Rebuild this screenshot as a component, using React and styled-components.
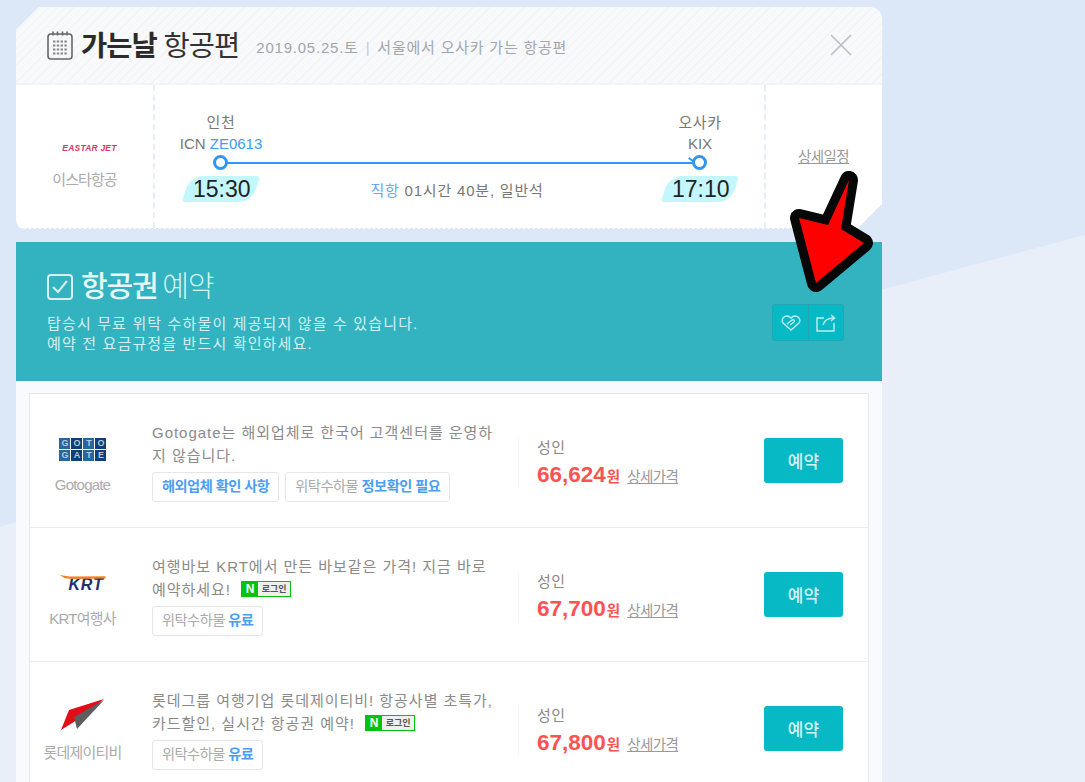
import React from "react";
import styled, { createGlobalStyle } from "styled-components";

const Global = createGlobalStyle`
  html, body { margin: 0; padding: 0; height: 782px; overflow: hidden; }
  body { font-family: "Liberation Sans", "Noto Sans CJK KR", sans-serif; }
  * { box-sizing: border-box; }
`;
const Page = styled.div`
  position: relative; width: 1085px; height: 782px; overflow: hidden; padding: 7px 0 0 16px;
  background: linear-gradient(-15.05deg, #e8eff8 0, #e8eff8 50.9%, #dce8f8 51%);
`;
const Column = styled.div`width: 866px; display: flex; flex-direction: column;`;
const FlightCard = styled.section`
  height: 222px; background: #fff; border-bottom: 1px dashed #dfe7f2;
  clip-path: path("M23 0 H852 Q866 0 866 14 V197 L841 222 H10 Q0 222 0 212 V23 Z");
`;
const CardHead = styled.header`
  height: 78px; display: flex; align-items: center; padding: 0 30px 0 31px;
  border-bottom: 2px solid #f2f4f8;
  background: repeating-linear-gradient(135deg, #f8f9fb 0 5px, #f2f3f7 5px 6px);
`;
const Title = styled.h1`margin: 1px 0 0 8px; font-size: 28.5px; line-height: 36px; font-weight: 400; color: #333; letter-spacing: -1px; white-space: nowrap; b { font-weight: 700; color: #2b2b2b; }`;
const Sub = styled.span`font-size: 15px; color: #a3a6ab; margin: 2px 0 0 17px; white-space: nowrap; letter-spacing: .78px; i { font-style: normal; color: #c5c8cc; margin: 0 7px; }`;
const Close = styled.button`margin-left: auto; width: 22px; height: 22px; padding: 0; border: 0; background: none; display: block;`;
const Route = styled.div`height: 143px; display: grid; grid-template-columns: 137px 613px 1fr;`;
const AirlineCell = styled.div`display: flex; flex-direction: column; align-items: center; padding-top: 55px;`;
const EastarLogo = styled.span`font: italic 700 8.5px/16px "Liberation Sans", sans-serif; color: #d8385f; white-space: nowrap; margin-left: 10px; letter-spacing: .2px;`;
const AirlineName = styled.span`margin-top: 14px; font-size: 15px; line-height: 20px; color: #aaa; letter-spacing: -.9px; white-space: nowrap;`;
const Timeline = styled.div`
  border-left: 2px dashed #e6edf7; border-right: 2px dashed #e6edf7; padding: 27px 22px 0 24px;
  display: grid; grid-template-columns: 84px 1fr 84px; grid-template-rows: 64px 1fr;
`;
const Stop = styled.div`grid-column: ${p => p.$col}; grid-row: 1; display: flex; flex-direction: column; align-items: center; font-size: 15px; line-height: 21px; color: #777; white-space: nowrap; letter-spacing: .6px; span { letter-spacing: 0; } em { font-style: normal; color: #3d9bfa; }`;
const Line = styled.div`position: relative; height: 2px; background: #3296f5; margin: 50px -42px 0; grid-column: 2; grid-row: 1; &::after { content: ""; position: absolute; right: 5px; top: -3px; width: 7px; height: 2px; background: #3296f5; transform: rotate(35deg); }`;
const Dot = styled.i`position: absolute; left: 50%; bottom: -8px; margin-left: -8px; width: 15px; height: 15px; border: 3px solid #3296f5; border-radius: 50%; background: #fff; z-index: 1;`;
const StopInner = styled.div`position: relative; display: flex; flex-direction: column; align-items: center; height: 50px;`;
const Time = styled.div`
  justify-self: center; width: 70px; height: 26px; background: #c4f7fd; border-radius: 13px 4px 13px 3px; transform: skewX(-18deg); display: flex; align-items: center; justify-content: center;
  span { transform: skewX(18deg) translateX(1px); font: 400 23px/26px "Liberation Sans", sans-serif; color: #222; }
`;
const Meta = styled.div`grid-column: 2; text-align: center; font-size: 15px; line-height: 26px; padding: 2px 7px 0 0; color: #777; letter-spacing: .8px; white-space: nowrap; em { font-style: normal; color: #62a9f2; }`;
const DetailCell = styled.div`display: flex; justify-content: center; padding-top: 62px; margin-left: -1px;`;
const Underlined = styled.a`font-size: 14.5px; line-height: 20px; color: #999; text-decoration: underline; letter-spacing: -.6px; white-space: nowrap;`;
const Banner = styled.section`
  margin-top: 13px; height: 139px; background: #33b3bf; padding: 25px 38px 0 31px; display: flex; justify-content: space-between; color: #fff;
`;
const BannerTitle = styled.h2`margin: 0 0 0 0; display: flex; align-items: center; gap: 8px; font-size: 29px; line-height: 40px; font-weight: 300; letter-spacing: -1.2px; color: #d6f0f3; b { font-weight: 500; color: #e8f7f8; margin-right: -2px; }`;
const BannerNote = styled.p`margin: 7px 0 0; font-size: 15px; line-height: 20px; color: #d4eff2; letter-spacing: 1.15px; white-space: nowrap;`;
const Actions = styled.div`align-self: flex-start; margin-top: 37px; display: flex; height: 37px; border: 1px solid #22a6b2; border-radius: 3px; background: #07b9c4;`;
const ActionBtn = styled.button`width: 35px; padding: 0; border: 0; background: none; display: flex; align-items: center; justify-content: center; & + & { border-left: 1px solid #22a6b2; }`;
const ListWrap = styled.section`flex: 1; background: #f9fafd; padding: 12px 13px 0 13px;`;
const List = styled.div`background: #fff; border: 1px solid #e8e8ec; border-bottom: 0;`;
const Row = styled.article`height: 134px; display: grid; grid-template-columns: 122px 1fr; border-bottom: 1px solid #ececec; `;
const Vendor = styled.div`display: flex; flex-direction: column; align-items: center; width: 105px; color: #aaa; font-size: 15px; letter-spacing: -.8px;`;
const LogoBox = styled.div`height: 81px; padding-top: 29px; display: flex; align-items: center; justify-content: center;`;
const VendorName = styled.span`line-height: 20px; white-space: nowrap;`;
const RowBody = styled.div`display: grid; grid-template-columns: 366px 246px 79px; padding-top: 27px;`;
const Desc = styled.div`width: 348px; word-break: break-all; font-size: 15px; line-height: 23px; color: #8a8a8a; letter-spacing: .97px;`;
const Tags = styled.div`display: flex; gap: 6px; margin-top: 5px;`;
const Tag = styled.span`display: inline-block; height: 30px; line-height: 27px; padding: 0 9px; border: 1px solid #e6e6e6; border-radius: 3px; background: #fff; font-size: 14.2px; color: #aaa; letter-spacing: -.5px; white-space: nowrap; b { font-weight: 700; color: #4d9ef0; }`;
const NLogin = styled.span`display: inline-flex; vertical-align: 2px; margin-left: 5px; height: 16px; width: 50px; background: #05c30c; padding: 1px; letter-spacing: 0; b { width: 16px; text-align: center; color: #fff; font: 700 12px/14px "Liberation Sans", sans-serif; } span { flex: 1; background: #eef0ee; color: #555; font-size: 9px; font-weight: 700; line-height: 14px; text-align: center; }`;
const Price = styled.div`height: 50px; margin-top: 17px; border-left: 1px solid #f4f4f4; padding-left: 18px; color: #888; font-size: 15px; line-height: 20px; letter-spacing: .4px;`;
const Amount = styled.div`display: flex; align-items: baseline; margin-top: 3px; white-space: nowrap; letter-spacing: 0;
  strong { font: 700 22.5px/28px "Liberation Sans", sans-serif; color: #fb5252; }
  em { font-style: normal; font-weight: 700; font-size: 14.5px; color: #fb5252; margin: 0 7px 0 1px; }
`;
const Book = styled.button`margin-top: 17px; width: 79px; height: 45px; border: 0; border-radius: 3px; background: #07b9c4; color: #d6f3f5; font-family: inherit; font-size: 17px; font-weight: 500; letter-spacing: 0;`;
const Arrow = styled.svg`position: absolute; left: 780px; top: 160px; pointer-events: none;`;
const GotoGrid = styled.div`display: grid; grid-template-columns: repeat(4, 11px); gap: 1px; width: 47px;`;
const GotoCell = styled.span`height: 11px; background: ${p => p.$d ? "#123e73" : "#2b6599"}; color: #b6cbdd; font: 700 9px/11px "Liberation Sans", sans-serif; text-align: center;`;
const KrtLogo = styled.span`position: relative; display: block; width: 46px; padding: 3px 0 0 9px; font: italic 900 16px/13px "Liberation Sans", sans-serif; color: #1d2f70; letter-spacing: .8px; &::before { content: ""; position: absolute; left: 0; top: 0; width: 46px; height: 4px; background: #f58220; clip-path: polygon(0 0, 22% 40%, 100% 30%, 100% 90%, 30% 100%, 12% 80%); }`;
const LotteMark = styled.svg`margin-top: -5px;`;

const rows = [
  { name: "Gotogate", logo: "goto", desc: <>Gotogate는 해외업체로 한국어 고객센터를 운영하지 않습니다.</>, tags: [<b key="a">해외업체 확인 사항</b>, <React.Fragment key="b">위탁수하물 <b>정보확인 필요</b></React.Fragment>], price: "66,624" },
  { name: "KRT여행사", logo: "krt", desc: <>여행바보 KRT에서 만든 바보같은 가격! 지금 바로 예약하세요! <NLogin><b>N</b><span>로그인</span></NLogin></>, tags: [<React.Fragment key="b">위탁수하물 <b>유료</b></React.Fragment>], price: "67,700" },
  { name: "롯데제이티비", logo: "lotte", desc: <>롯데그룹 여행기업 롯데제이티비! 항공사별 초특가, 카드할인, 실시간 항공권 예약! <NLogin><b>N</b><span>로그인</span></NLogin></>, tags: [<React.Fragment key="b">위탁수하물 <b>유료</b></React.Fragment>], price: "67,800" },
];

function Logo({ kind }) {
  if (kind === "goto") return <GotoGrid>{"GOTOGATE".split("").map((c, i) => <GotoCell key={i} $d={i % 2 === 1}>{c}</GotoCell>)}</GotoGrid>;
  if (kind === "krt") return <KrtLogo>KRT</KrtLogo>;
  return <LotteMark width="44" height="32" viewBox="0 0 44 32"><path d="M43 0 L8 11 L0 31 L24 16 Z" fill="#e30b17"/><path d="M43 1 L16 30 L13 18 Z" fill="#5d5d5d"/></LotteMark>;
}

export default function App() {
  return (
    <Page>
      <Global />
      <Column>
        <FlightCard>
          <CardHead>
            <svg width="26" height="29" viewBox="0 0 26 29" fill="none" stroke="#666" strokeWidth="1.6"><rect x="1" y="3" width="24" height="25" rx="3"/><path d="M6 0.500v4M10.500 0.500v4M15.500 0.500v4M20 0.500v4" /><path d="M6 10.500h14M6 14.500h14M6 18.500h14M6 22.500h14" strokeDasharray="2.400 1.400" strokeWidth="1.800" stroke="#888"/></svg>
            <Title><b>가는날</b> 항공편</Title>
            <Sub>2019.05.25.토<i>|</i>서울에서 오사카 가는 항공편</Sub>
            <Close aria-label="닫기"><svg width="22" height="22" viewBox="0 0 22 22" stroke="#b9bec4" strokeWidth="1.6"><path d="M1 1l20 20M21 1L1 21"/></svg></Close>
          </CardHead>
          <Route>
            <AirlineCell><EastarLogo>EASTAR JET</EastarLogo><AirlineName>이스타항공</AirlineName></AirlineCell>
            <Timeline>
              <Stop $col={1}><StopInner>인천<span>ICN <em>ZE0613</em></span><Dot /></StopInner></Stop>
              <Line />
              <Stop $col={3}><StopInner>오사카<span>KIX</span><Dot /></StopInner></Stop>
              <Time><span>15:30</span></Time>
              <Meta><em>직항</em> 01시간 40분, 일반석</Meta>
              <Time><span>17:10</span></Time>
            </Timeline>
            <DetailCell><Underlined>상세일정</Underlined></DetailCell>
          </Route>
        </FlightCard>
        <Banner>
          <div>
            <BannerTitle>
              <svg width="26" height="26" viewBox="0 0 26 26" fill="none" stroke="#d6f0f3" strokeWidth="2"><rect x="1" y="1" width="24" height="24" rx="3"/><path d="M6 13l5 5 9-11"/></svg>
              <span><b>항공권</b> 예약</span>
            </BannerTitle>
            <BannerNote>탑승시 무료 위탁 수하물이 제공되지 않을 수 있습니다.<br />예약 전 요금규정을 반드시 확인하세요.</BannerNote>
          </div>
          <Actions>
            <ActionBtn aria-label="찜"><svg width="20" height="18" viewBox="0 0 20 18" fill="none" stroke="#bfeef1" strokeWidth="1.4"><path d="M10 16L2 9C0 6 2 2 6 2c2 0 3 1 4 2 1-1 2-2 4-2 4 0 6 4 4 7z"/><path d="M6 10l5-4c2-1 3 1 2 2l-4 3"/></svg></ActionBtn>
            <ActionBtn aria-label="공유"><svg width="20" height="18" viewBox="0 0 20 18" fill="none" stroke="#bfeef1" strokeWidth="1.4"><path d="M8 4H1v13h17v-8"/><path d="M7 11c1-4 4-7 11-7M15 1l3.500 3-3.500 3"/></svg></ActionBtn>
          </Actions>
        </Banner>
        <ListWrap>
          <List>
            {rows.map(r => (
              <Row key={r.name}>
                <Vendor><LogoBox><Logo kind={r.logo} /></LogoBox><VendorName>{r.name}</VendorName></Vendor>
                <RowBody>
                  <Desc>{r.desc}<Tags>{r.tags.map((t, i) => <Tag key={i}>{t}</Tag>)}</Tags></Desc>
                  <Price>성인<Amount><strong>{r.price}</strong><em>원</em><Underlined>상세가격</Underlined></Amount></Price>
                  <Book>예약</Book>
                </RowBody>
              </Row>
            ))}
          </List>
        </ListWrap>
      </Column>
      <Arrow width="100" height="140" viewBox="780 160 100 140">
        <path d="M849 180 L828 225 L799 218 L816 283 L864 243 L841 229 Z" fill="#fe0000" stroke="#070707" strokeWidth="18" strokeLinejoin="round" paintOrder="stroke" />
      </Arrow>
    </Page>
  );
}
